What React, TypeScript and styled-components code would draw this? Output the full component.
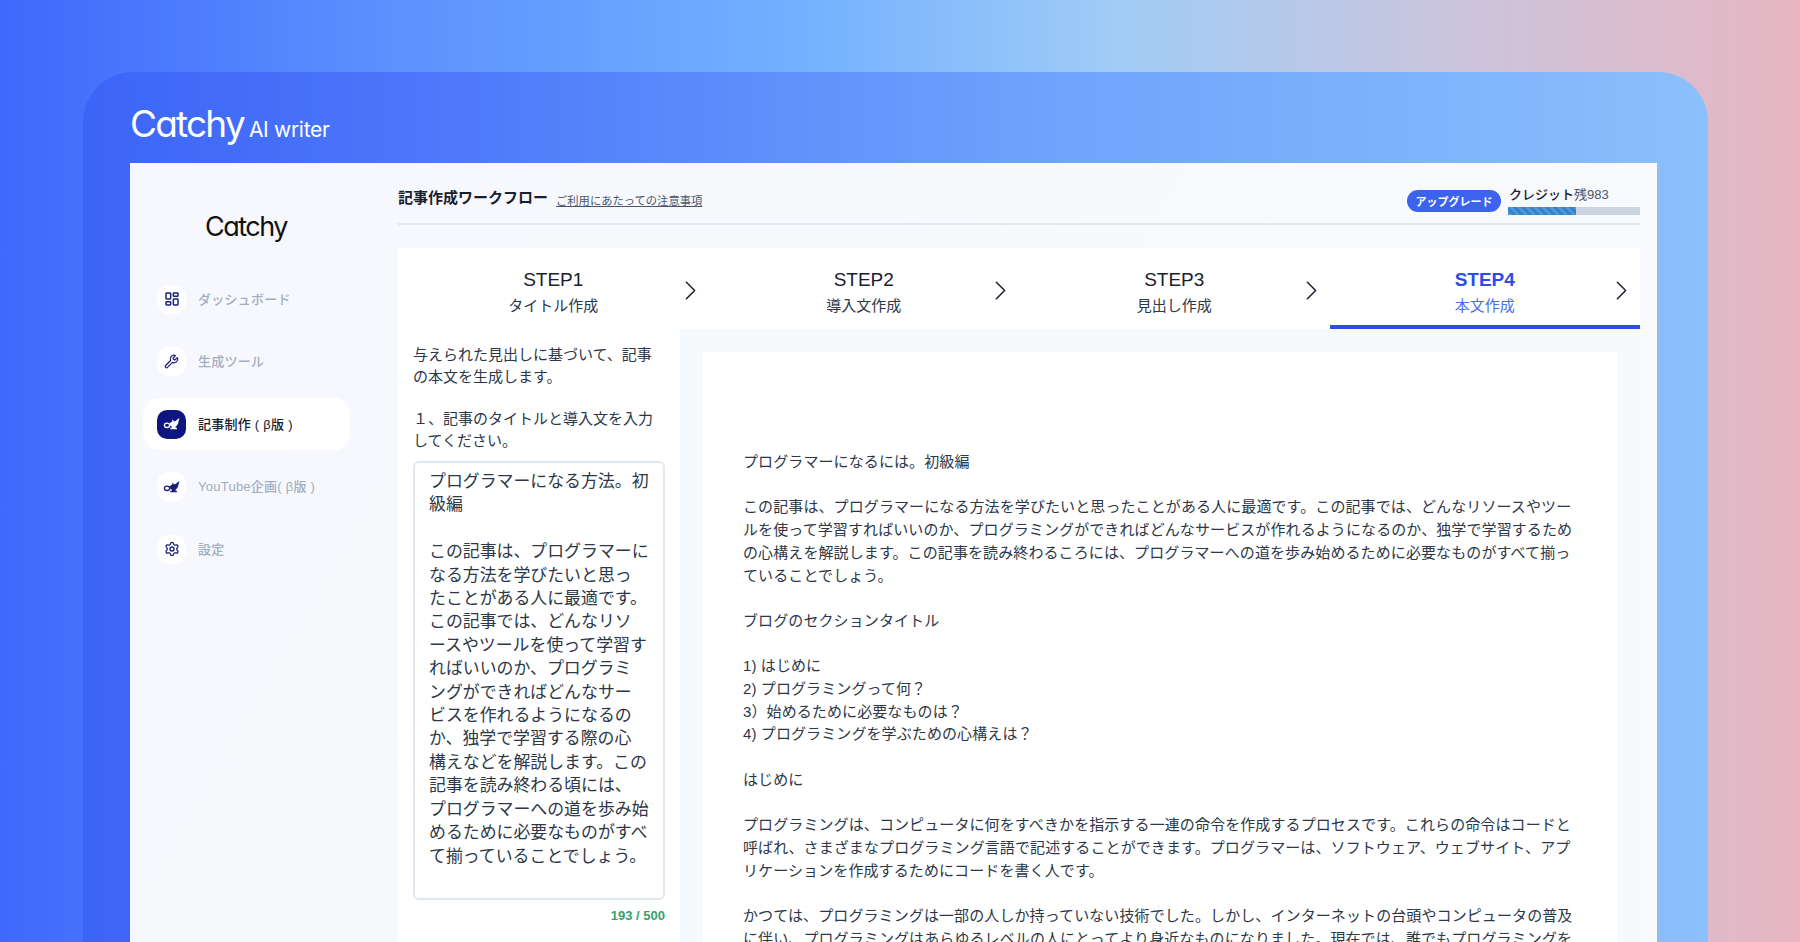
import React from 'react';
import styled, { createGlobalStyle } from 'styled-components';
import { LayoutDashboard, Wrench, Settings, ChevronRight } from 'lucide-react';

const GlobalStyle = createGlobalStyle`
  html, body {
    margin: 0;
    height: 942px;
    overflow: hidden;
    font-family: "Liberation Sans", "Noto Sans CJK JP", sans-serif;
    color: #2d3748;
  }
  * { box-sizing: border-box; }
`;

const LampIcon = ({ color }: { color: string }) => (
  <svg width="18" height="14" viewBox="0 0 20 16" fill="none">
    <path
      d="M7 8C8 6.200 9.400 5.200 10.600 5L10 2.600L12.400 4.800C13.600 4.900 14.600 4.400 15.400 3.400C16.200 2.400 17.200 1.800 18.800 1.400C18 2.600 17.600 3.800 17.400 5.400C17.200 7.800 16 9.800 14 11L14.200 12.200H15.600V14H8V12.200H9.800L10 11.200C8.600 10.800 7.600 9.600 7 8Z"
      fill={color}
    />
    <ellipse cx="4.300" cy="9.500" rx="3" ry="2.500" stroke={color} strokeWidth="1.500" />
  </svg>
);

const navItems = [
  { label: 'ダッシュボード', icon: <LayoutDashboard size={16} strokeWidth={2.2} color="#1a1f7a" /> },
  { label: '生成ツール', icon: <Wrench size={15} strokeWidth={2} color="#1a1f7a" /> },
  { label: '記事制作 ( β版 )', icon: <LampIcon color="#fff" />, active: true },
  { label: 'YouTube企画( β版 )', icon: <LampIcon color="#1a1f7a" /> },
  { label: '設定', icon: <Settings size={16} strokeWidth={2} color="#1a1f7a" /> },
];

const steps = [
  { title: 'STEP1', sub: 'タイトル作成' },
  { title: 'STEP2', sub: '導入文作成' },
  { title: 'STEP3', sub: '見出し作成' },
  { title: 'STEP4', sub: '本文作成', active: true },
];

const inputText = `プログラマーになる方法。初
級編

この記事は、プログラマーに
なる方法を学びたいと思っ
たことがある人に最適です。
この記事では、どんなリソ
ースやツールを使って学習す
ればいいのか、プログラミ
ングができればどんなサー
ビスを作れるようになるの
か、独学で学習する際の心
構えなどを解説します。この
記事を読み終わる頃には、
プログラマーへの道を歩み始
めるために必要なものがすべ
て揃っていることでしょう。`;

const articleText = `プログラマーになるには。初級編

この記事は、プログラマーになる方法を学びたいと思ったことがある人に最適です。この記事では、どんなリソースやツー
ルを使って学習すればいいのか、プログラミングができればどんなサービスが作れるようになるのか、独学で学習するため
の心構えを解説します。この記事を読み終わるころには、プログラマーへの道を歩み始めるために必要なものがすべて揃っ
ていることでしょう。

ブログのセクションタイトル

1) はじめに
2) プログラミングって何？
3）始めるために必要なものは？
4) プログラミングを学ぶための心構えは？

はじめに

プログラミングは、コンピュータに何をすべきかを指示する一連の命令を作成するプロセスです。これらの命令はコードと
呼ばれ、さまざまなプログラミング言語で記述することができます。プログラマーは、ソフトウェア、ウェブサイト、アプ
リケーションを作成するためにコードを書く人です。

かつては、プログラミングは一部の人しか持っていない技術でした。しかし、インターネットの台頭やコンピュータの普及
に伴い、プログラミングはあらゆるレベルの人にとってより身近なものになりました。現在では、誰でもプログラミングを`;

export default function App() {
  return (
    <>
      <GlobalStyle />
      <Page>
        <Frame>
          <Brand>
            <BrandName>Catchy</BrandName>
            <BrandSub>AI writer</BrandSub>
          </Brand>
          <Shell>
            <Sidebar>
              <SideLogo>Catchy</SideLogo>
              <Nav>
                {navItems.map((item) => (
                  <NavItem key={item.label} $active={item.active}>
                    <NavIcon $active={item.active}>{item.icon}</NavIcon>
                    <NavLabel $active={item.active}>{item.label}</NavLabel>
                  </NavItem>
                ))}
              </Nav>
            </Sidebar>
            <Main>
              <Header>
                <HeaderTitle>記事作成ワークフロー</HeaderTitle>
                <HeaderLink href="#">ご利用にあたっての注意事項</HeaderLink>
                <Upgrade>アップグレード</Upgrade>
                <Credit>
                  <CreditText>
                    クレジット<small>残983</small>
                  </CreditText>
                  <CreditTrack>
                    <CreditFill style={{ width: `${(68 / 132) * 100}%` }} />
                  </CreditTrack>
                </Credit>
              </Header>
              <Steps>
                {steps.map((step) => (
                  <Step key={step.title} $active={step.active}>
                    <span />
                    <StepText $active={step.active}>
                      <StepTitle $active={step.active}>{step.title}</StepTitle>
                      <StepSub>{step.sub}</StepSub>
                    </StepText>
                    <StepArrow>
                      <ChevronRight size={33} strokeWidth={1.1} color="#1a202c" />
                    </StepArrow>
                  </Step>
                ))}
              </Steps>
              <Body>
                <InputColumn>
                  <Intro>与えられた見出しに基づいて、記事の本文を生成します。</Intro>
                  <Instruction>
                    １、記事のタイトルと導入文を入力
                    <br />
                    してください。
                  </Instruction>
                  <InputBox>{inputText}</InputBox>
                  <Counter>193 / 500</Counter>
                </InputColumn>
                <OutputColumn>
                  <Paper>{articleText}</Paper>
                </OutputColumn>
              </Body>
            </Main>
          </Shell>
        </Frame>
      </Page>
    </>
  );
}

const Page = styled.div`
  height: 942px;
  padding: 72px 92px 0 83px;
  overflow: hidden;
  background: linear-gradient(90deg, #3e69fb 0%, #5a8efe 20%, #74b1ff 45%, #a0ccf6 62%, #c9c5dd 80%, #e7b6c2 100%);
`;

const Frame = styled.div`
  height: 870px;
  padding: 0 51px 0 47px;
  border-radius: 50px 50px 0 0;
  background: linear-gradient(90deg, #3c65f7 0%, #4b76fa 20%, #6ea4fc 60%, #8ac0fb 100%);
`;

const Brand = styled.div`
  height: 91px;
  display: flex;
  align-items: baseline;
  padding-top: 30px;
  color: #fff;
`;

const BrandName = styled.span`
  font-family: Inter, sans-serif;
  font-feature-settings: 'cv11';
  font-size: 37px;
  line-height: 44px;
  letter-spacing: -1.800px;
`;

const BrandSub = styled.span`
  margin-left: 5px;
  font-family: Inter, sans-serif;
  font-feature-settings: 'cv11';
  font-size: 21px;
  line-height: 24px;
  letter-spacing: -0.3px;
`;

const Shell = styled.div`
  height: 779px;
  display: flex;
  padding-right: 17px;
  background: linear-gradient(120deg, #f6f8fd 0%, #f8fafd 100%);
`;

const Sidebar = styled.aside`
  width: 268px;
  flex: none;
  padding: 47px 0 0 13px;
`;

const SideLogo = styled.div`
  width: 206px;
  text-align: center;
  font-family: Inter, sans-serif;
  font-feature-settings: 'cv11';
  font-size: 27px;
  line-height: 34px;
  letter-spacing: -1.500px;
  color: #111;
`;

const Nav = styled.nav`
  margin-top: 29px;
  display: flex;
  flex-direction: column;
  gap: 10.500px;
`;

const NavItem = styled.div<{ $active?: boolean }>`
  width: 207px;
  height: 52px;
  display: flex;
  align-items: center;
  padding-left: 14px;
  border-radius: 16px;
  background: ${({ $active }) => ($active ? '#fff' : 'transparent')};
`;

const NavIcon = styled.div<{ $active?: boolean }>`
  width: 29px;
  height: 29px;
  display: flex;
  align-items: center;
  justify-content: center;
  border-radius: ${({ $active }) => ($active ? '10px' : '12px')};
  background: ${({ $active }) => ($active ? '#0e1580' : '#fff')};
`;

const NavLabel = styled.span<{ $active?: boolean }>`
  margin-left: 12px;
  padding-bottom: 2px;
  font-size: 13px;
  font-weight: 500;
  letter-spacing: 0.25px;
  color: ${({ $active }) => ($active ? '#1a202c' : '#a0aec0')};
`;

const Main = styled.main`
  flex: 1;
  min-width: 0;
  display: flex;
  flex-direction: column;
`;

const Header = styled.header`
  height: 62px;
  flex: none;
  display: flex;
  align-items: flex-start;
  border-bottom: 2px solid #e2e8f0;
  padding-top: 25px;
`;

const HeaderTitle = styled.h1`
  margin: 0;
  font-size: 15px;
  line-height: 20px;
  font-weight: 700;
  color: #1a202c;
`;

const HeaderLink = styled.a`
  margin: 5px 0 0 8px;
  font-size: 11.300px;
  line-height: 16px;
  color: #4a5568;
`;

const Upgrade = styled.div`
  margin: 2px 0 0 auto;
  width: 94px;
  height: 22px;
  display: flex;
  align-items: center;
  justify-content: center;
  border-radius: 11px;
  background: #3b63ee;
  color: #fff;
  font-size: 11px;
  font-weight: 700;
`;

const Credit = styled.div`
  width: 132px;
  margin-left: 7px;
`;

const CreditText = styled.div`
  height: 22px;
  margin-top: -3px;
  padding-left: 1px;
  font-size: 13px;
  line-height: 20px;
  font-weight: 500;
  color: #1a202c;

  small {
    font-size: 13px;
    font-weight: 400;
    color: #4a5568;
  }
`;

const CreditTrack = styled.div`
  height: 8px;
  background: #cbd5e0;
`;

const CreditFill = styled.div`
  height: 100%;
  background-color: #3182ce;
  background-image: linear-gradient(
    45deg,
    rgba(255, 255, 255, 0.15) 25%,
    transparent 25%,
    transparent 50%,
    rgba(255, 255, 255, 0.15) 50%,
    rgba(255, 255, 255, 0.15) 75%,
    transparent 75%
  );
  background-size: 8px 8px;
`;

const Steps = styled.div`
  margin-top: 23px;
  height: 81px;
  flex: none;
  display: grid;
  grid-template-columns: repeat(4, 1fr);
  background: #fff;
`;

const Step = styled.div<{ $active?: boolean }>`
  display: grid;
  grid-template-columns: 1fr auto 1fr;
  align-items: center;
  padding: 7px 2px 0 0;
  border-bottom: 4px solid ${({ $active }) => ($active ? '#2b4de8' : 'transparent')};
`;

const StepText = styled.div<{ $active?: boolean }>`
  text-align: center;
  padding: 4px 0 0 2px;
  color: ${({ $active }) => ($active ? '#4a6cec' : '#2d3748')};
`;

const StepTitle = styled.div<{ $active?: boolean }>`
  font-size: 19px;
  line-height: 24px;
  font-weight: ${({ $active }) => ($active ? 700 : 400)};
  color: ${({ $active }) => ($active ? '#2b4de8' : '#1a202c')};
`;

const StepSub = styled.div`
  margin-top: 3px;
  font-size: 15px;
  line-height: 22px;
`;

const StepArrow = styled.div`
  justify-self: end;
  display: flex;
`;

const Body = styled.div`
  flex: 1;
  min-height: 0;
  display: flex;
`;

const InputColumn = styled.section`
  width: 282px;
  flex: none;
  padding: 15px 15px 0;
  background: #fff;
`;

const Intro = styled.p`
  margin: 0;
  font-size: 15px;
  line-height: 22px;
  color: #2d3748;
`;

const Instruction = styled(Intro)`
  margin-top: 20px;
`;

const InputBox = styled.div`
  margin-top: 9px;
  height: 439px;
  padding: 7px 8px 7px 14px;
  border: 2px solid #e2e8f0;
  border-radius: 6px;
  font-size: 16.900px;
  line-height: 23.400px;
  white-space: pre-wrap;
  color: #2d3748;
  background: #fff;
`;

const Counter = styled.div`
  margin-top: 8px;
  text-align: right;
  font-size: 13px;
  line-height: 16px;
  font-weight: 700;
  color: #38a169;
`;

const OutputColumn = styled.section`
  flex: 1;
  min-width: 0;
  padding: 23px 23px 0;
  background: #f7fafc;
`;

const Paper = styled.div`
  height: 100%;
  padding: 99px 20px 0 40px;
  background: #fff;
  font-size: 15px;
  letter-spacing: 0.1px;
  line-height: 22.700px;
  white-space: pre-wrap;
  color: #2d3748;
`;
